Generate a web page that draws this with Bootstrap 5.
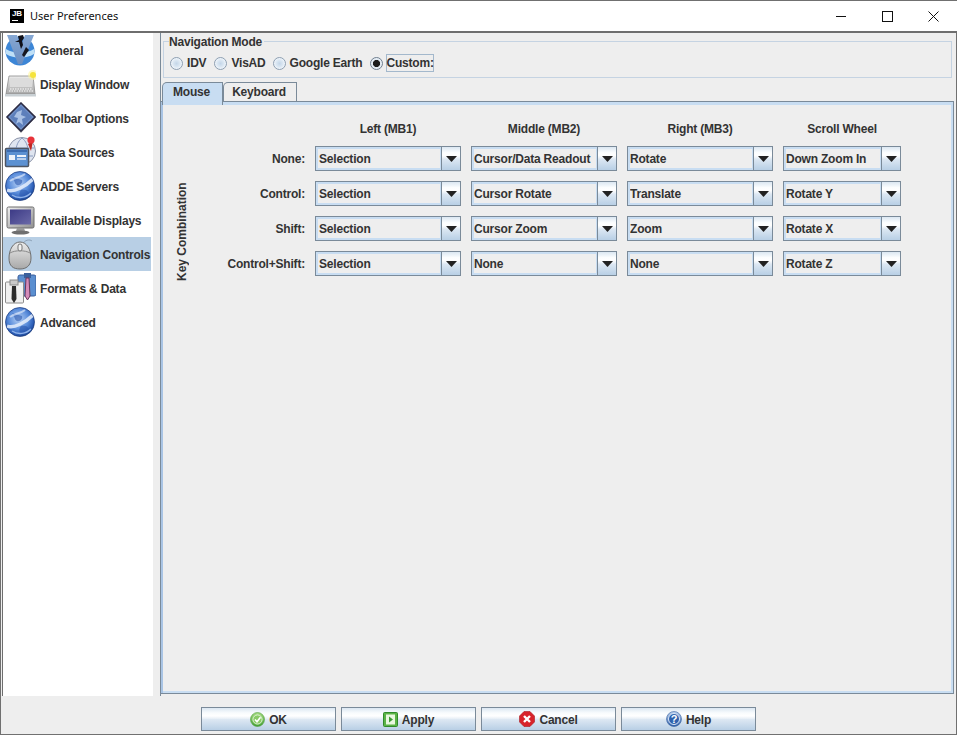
<!doctype html>
<html lang="en">
<head>
<meta charset="utf-8">
<title>User Preferences</title>
<link href="https://cdn.jsdelivr.net/npm/bootstrap@5.3.0/dist/css/bootstrap.min.css" rel="stylesheet">
<style>
html,body{margin:0;height:735px;overflow:hidden;background:#eee}
body{font:700 12px/14px "Liberation Sans",Arial,sans-serif;color:#333;letter-spacing:-.2px}
.defs-holder{width:0;height:0;display:block}
.win-frame{width:957px;height:735px;border:1px solid #707070;background:#eee}
.win-title{height:32px;background:#fff;border-bottom:2px solid #6e6e6e;margin:0 -1px 0 -1px;padding:0 1px 0 10px;flex:none}
.win-title-text{font:400 11px/16px "Noto Sans","Open Sans",sans-serif;color:#111;margin-left:6px;letter-spacing:0}
.jb-logo{width:14px;height:14px;background:#000;color:#fff;font:700 8px/9px "Liberation Sans",sans-serif;text-align:center;letter-spacing:0}
.jb-logo::after{content:"";display:block;width:6px;height:1px;background:#fff;margin:2px 0 0 2px}
.win-btn{width:46px;height:30px}
.work-row{height:663px;padding-left:1px;flex:none}
.pref-side{width:151px;flex:none;background:#fff;border-left:1px solid #6e6e6e;border-radius:0;display:block}
.list-group-item.pref-item{height:34px;width:148px;padding:0 0 0 1px;border:0;border-radius:0;background:transparent;color:#333;gap:4px;white-space:nowrap;font-weight:700;margin:0}
.list-group-item.pref-item.active{background:#b8cfe5;color:#333;border:0;margin:0}
.pref-item svg{flex:none}
.pref-label{margin-top:2px}
.pref-body{width:795px;margin-left:7px;border-left:1px solid #7a8a99;flex:none}
.mode-box{width:789px;height:45px;margin:0 0 4px 2px;border:1px solid #c5d3e2;padding:0 0 0 6px;display:block}
.mode-legend{float:none;width:auto;margin:0 0 0 -1px;padding:2px 2px 0 0;font:700 12px/14px "Liberation Sans",sans-serif;letter-spacing:-.2px;height:16px;display:table}
.mode-row{margin-top:5px;height:18px}
.mode-opt{margin:0;padding:0;min-height:0;gap:4px;margin-right:8px}
.mode-opt.tightopt{margin-right:7px}
.mode-opt.lastopt{margin-left:-1px;gap:3px}
.mode-radio.form-check-input{float:none;margin:0;width:13px;height:13px;border:1px solid #8d9fb2;background:radial-gradient(circle at 50% 50%,#c4d6e8 0,#dce8f3 45%,#fbfcfe 85%);box-shadow:none}
.mode-radio.form-check-input:checked{background:radial-gradient(circle,#1c1c1c 0,#1c1c1c 3.2px,#dfe8f1 3.9px,#f7f9fb 100%);border-color:#6f7f90}
.mode-text{margin:0;color:#333}
.mode-text.focused{border:1px solid #a3b8cc;padding:1px 0;line-height:14px;width:48px;text-align:center}
.tab-strip{height:19px;margin-left:1px;border:0;flex-wrap:nowrap}
.tab-strip .nav-link{height:19px;padding:2px 2px 0 0;text-align:center;border:1px solid #7a8a99;border-bottom:0;border-radius:5px 0 0 0;background:#eee;color:#333;font-weight:700;margin:0;line-height:14px}
.tab-strip .nav-link.active{height:23px;position:relative;z-index:2;background:#c8ddf2;color:#333;border-color:#7a8a99;width:61px;padding-top:2px}
.tab-strip .kb-tab{width:74px}
.tab-pane-box{width:793px;height:593px;border:1px solid #7a8a99;border-width:1px 1px 1px 0;box-shadow:inset 2px 0 0 #a9c4e4,inset -2px 0 0 #c8ddf2,inset 0 3px 0 #c8ddf2,inset 0 -2px 0 #c8ddf2;padding:12px 0 0 3px}
.keycombo{writing-mode:vertical-rl;transform:rotate(180deg);width:14px;height:97px;margin:70px 0 0 11px;white-space:nowrap;flex:none;line-height:14px;letter-spacing:0}
.map-grid{display:grid;grid-template-columns:117px 146px 146px 146px 118px;grid-template-rows:22px repeat(4,25px);gap:10px;margin-left:-1px;align-content:start}
.col-head{align-self:end;text-align:center}
.row-head{text-align:right;align-self:center}
.combo-box{height:25px;border:1px solid #7a8a99;background:#eee}
.combo-val{flex:1 1 auto;min-width:0;border:2px solid #c8ddf2;border-right:1px solid #c8ddf2;padding:0;line-height:21px;white-space:nowrap;overflow:hidden}
.combo-val.sel{padding-left:1px}
.combo-arrow{width:19px;flex:none;border-left:1px solid #7a8a99;background:linear-gradient(#dbe7f2 0,#fbfdfe 24%,#ffffff 36%,#e9f0f7 48%,#dde8f3 52%,#b8cfe5 100%);display:flex;align-items:center;justify-content:center}
.foot-row{height:38px;flex:none;padding-top:11px;gap:5px}
.metal-btn.btn{width:135px;height:24px;padding:1px 0 0;border:1px solid #7a8a99;border-radius:0;color:#333;font:700 12px/14px "Liberation Sans",sans-serif;letter-spacing:-.2px;background:linear-gradient(#dbe7f2 0,#f8fbfd 22%,#ffffff 36%,#e9f0f7 48%,#dde8f3 52%,#b8cfe5 100%);gap:4px}
.metal-btn svg{margin-top:-1px}
</style>
</head>
<body>
<svg class="defs-holder" aria-hidden="true">
<defs>
<radialGradient id="gl" cx=".45" cy=".4" r=".62"><stop offset="0" stop-color="#b7d0f4"/><stop offset=".55" stop-color="#5a8ddb"/><stop offset=".85" stop-color="#2a5cb5"/><stop offset="1" stop-color="#1a4088"/></radialGradient>
<linearGradient id="gv" x1="0" y1="0" x2="0" y2="1"><stop offset="0" stop-color="#86a8d4"/><stop offset="1" stop-color="#6b8dbf"/></linearGradient>
<linearGradient id="gs" x1="0" y1="0" x2="0" y2="1"><stop offset="0" stop-color="#ececec"/><stop offset="1" stop-color="#a8a8a8"/></linearGradient>
<linearGradient id="gm" x1="0" y1="0" x2="1" y2="1"><stop offset="0" stop-color="#f1f1f1"/><stop offset="1" stop-color="#8f8f8f"/></linearGradient>
<linearGradient id="gd" x1="0" y1="0" x2="1" y2="1"><stop offset="0" stop-color="#3c3a86"/><stop offset="1" stop-color="#6b6aa8"/></linearGradient>
<linearGradient id="gok" x1="0" y1="0" x2="0" y2="1"><stop offset="0" stop-color="#a6dc80"/><stop offset="1" stop-color="#43a033"/></linearGradient>
<linearGradient id="gbl" x1="0" y1="0" x2="0" y2="1"><stop offset="0" stop-color="#bcd2f0"/><stop offset="1" stop-color="#2f5ea8"/></linearGradient>
<symbol id="globe" viewBox="0 0 32 32">
<circle cx="16" cy="16" r="14.500" fill="url(#gl)"/>
<path d="M8 7C11 10 10 14 13 15C16 16 19 13 18 10ZM17 20C20 19 25 20 25 24C23 27 19 28 16 27C15 25 15 22 17 20Z" fill="#2a56ad" opacity=".6"/>
<path d="M3 20C10 23 22 16 29 9" fill="none" stroke="#e6effc" stroke-width="3.500" opacity=".85"/>
<path d="M6 11C11 7 16 8 21 4" fill="none" stroke="#eef4fe" stroke-width="2" opacity=".6"/>
<path d="M8 25C14 29 22 28 27 23" fill="none" stroke="#8fb2ea" stroke-width="1.500"/>
<circle cx="16" cy="16" r="14.500" fill="none" stroke="#1a3a7c" stroke-width=".7"/>
</symbol>
</defs>
</svg>
<div class="win-frame d-flex flex-column">
  <div class="win-title d-flex align-items-center">
    <div class="jb-logo">JB</div>
    <span class="win-title-text">User Preferences</span>
    <div class="d-flex ms-auto">
      <div class="win-btn d-flex align-items-center justify-content-center"><svg width="11" height="11" viewBox="0 0 11 11"><path d="M0 5.500H10" stroke="#111" fill="none"/></svg></div>
      <div class="win-btn d-flex align-items-center justify-content-center"><svg width="11" height="11" viewBox="0 0 11 11"><rect x=".5" y=".5" width="10" height="10" stroke="#111" fill="none"/></svg></div>
      <div class="win-btn d-flex align-items-center justify-content-center"><svg width="11" height="11" viewBox="0 0 11 11"><path d="M.5 .5L10.500 10.500M10.500 .5L.5 10.500" stroke="#111" fill="none"/></svg></div>
    </div>
  </div>
  <div class="work-row d-flex">
    <div class="pref-side list-group">
      <a class="pref-item list-group-item d-flex align-items-center">
        <svg width="32" height="32" viewBox="0 0 32 32"><circle cx="16" cy="17" r="14.500" fill="#3d86d6"/><path d="M2 15C10 20 22 20 30 15V20C22 25 10 25 2 20Z" fill="#bfe0f7"/><path d="M3 1H13L17 12L21 1H30L18 30H14Z" fill="url(#gv)"/><path d="M14 2L19 1L20 4L18 7L19 11L17 15L15 8L11 8L15 6Z" fill="#101018"/><path d="M22 13L25 16L20 23L18 21Z" fill="#17171f"/></svg>
        <span class="pref-label">General</span></a>
      <a class="pref-item list-group-item d-flex align-items-center">
        <svg width="32" height="32" viewBox="0 0 32 32"><path d="M5 8H29L31 26H2Z" fill="url(#gs)" stroke="#8c8c8c" stroke-width=".8"/><rect x="6" y="10" width="22" height="9" fill="#dcdcdc"/><path d="M6 21H28M5 23H29" stroke="#fff" stroke-dasharray="1.500 1"/><rect x="1" y="26" width="31" height="2.500" fill="#c9d0d4"/><circle cx="29" cy="7" r="5" fill="#fff59a" opacity=".6"/><circle cx="29" cy="7" r="3" fill="#f5e33b"/></svg>
        <span class="pref-label">Display Window</span></a>
      <a class="pref-item list-group-item d-flex align-items-center">
        <svg width="32" height="32" viewBox="0 0 32 32"><path d="M6 18L17 30L28 18" fill="none" stroke="#a5a5a5" stroke-width="1.400"/><path d="M17 1L31 15L17 29L3 15Z" fill="#6f8fc6" stroke="#2c2c44" stroke-width="1.600"/><path d="M17 4L28 15L17 26L6 15Z" fill="#5d7fbb"/><path d="M13 10L18 8L17 13L22 15L18 17L19 23L15 20L12 22L14 16L10 15Z" fill="#a9c0e4"/></svg>
        <span class="pref-label">Toolbar Options</span></a>
      <a class="pref-item list-group-item d-flex align-items-center">
        <svg width="32" height="32" viewBox="0 0 32 32"><circle cx="18" cy="15" r="13.500" fill="#dfe5f0" stroke="#8b93a8"/><path d="M6 12H30M8 20H29M18 2C10 8 10 22 18 28C26 22 26 8 18 2Z" fill="none" stroke="#8a9cc0"/><path d="M24 8L27 15L29 5Z" fill="#c2261f"/><circle cx="27" cy="4" r="3.600" fill="#e8333a"/><rect x="1.500" y="12.500" width="23" height="18" rx="1" fill="#5c91d2" stroke="#4d5563" stroke-width="1.500"/><rect x="3" y="14" width="20" height="2" fill="#3c6cb0"/><rect x="5" y="19" width="6" height="5" fill="#eef3fa"/><rect x="13" y="19" width="9" height="2" fill="#eef3fa"/><rect x="13" y="22" width="9" height="2" fill="#b9d0ee"/></svg>
        <span class="pref-label">Data Sources</span></a>
      <a class="pref-item list-group-item d-flex align-items-center">
        <svg width="32" height="32"><use href="#globe"/></svg>
        <span class="pref-label">ADDE Servers</span></a>
      <a class="pref-item list-group-item d-flex align-items-center">
        <svg width="32" height="32" viewBox="0 0 32 32"><rect x="3" y="3" width="27" height="21" rx="1.500" fill="url(#gm)" stroke="#6d6d6d"/><rect x="6" y="5.500" width="21" height="15" fill="url(#gd)"/><path d="M13 24H20L21 27H12Z" fill="#9a9a9a"/><ellipse cx="16.500" cy="28.500" rx="9" ry="2" fill="#6f6f6f"/></svg>
        <span class="pref-label">Available Displays</span></a>
      <a class="pref-item list-group-item active d-flex align-items-center" aria-current="true">
        <svg width="32" height="32" viewBox="0 0 32 32"><path d="M19 6C20 2 26 1 28 3" fill="none" stroke="#8fa3b8"/><path d="M16 4C23 4 27 12 27 20C27 28 22 31 16 31C9 31 5 28 5 20C5 12 9 4 16 4Z" fill="url(#gs)" stroke="#6e6e6e"/><path d="M6 15C11 12 21 12 26 15" fill="none" stroke="#8b8b8b"/><rect x="14" y="6" width="4" height="7" rx="2" fill="#f2f2f2" stroke="#777"/></svg>
        <span class="pref-label">Navigation Controls</span></a>
      <a class="pref-item list-group-item d-flex align-items-center">
        <svg width="32" height="32" viewBox="0 0 32 32"><rect x="14" y="3" width="18" height="21" rx="2" fill="#5b8fd0" stroke="#3a5f9c"/><rect x="20" y="1" width="7" height="5" fill="#3a5f9c"/><path d="M22 6H25L26 24L23.500 28L21 24Z" fill="#d58ab8" stroke="#65365c"/><rect x="1.500" y="10" width="18" height="21" rx="1" fill="#f0f0f0" stroke="#8a8a8a"/><rect x="6" y="8" width="8" height="5" fill="#c9c9c9" stroke="#8a8a8a"/><path d="M8 14H12L12.500 27L10 31L7.500 27Z" fill="#2b2b2b"/></svg>
        <span class="pref-label">Formats &amp; Data</span></a>
      <a class="pref-item list-group-item d-flex align-items-center">
        <svg width="32" height="32"><use href="#globe"/></svg>
        <span class="pref-label">Advanced</span></a>
    </div>
    <div class="pref-body">
      <fieldset class="mode-box">
        <legend class="mode-legend">Navigation Mode</legend>
        <div class="mode-row d-flex align-items-center">
          <div class="mode-opt form-check d-flex align-items-center"><input class="mode-radio form-check-input" type="radio" name="navmode" id="m1"><label class="mode-text" for="m1">IDV</label></div>
          <div class="mode-opt tightopt form-check d-flex align-items-center"><input class="mode-radio form-check-input" type="radio" name="navmode" id="m2"><label class="mode-text" for="m2">VisAD</label></div>
          <div class="mode-opt form-check d-flex align-items-center"><input class="mode-radio form-check-input" type="radio" name="navmode" id="m3"><label class="mode-text" for="m3">Google Earth</label></div>
          <div class="mode-opt lastopt form-check d-flex align-items-center"><input class="mode-radio form-check-input" type="radio" name="navmode" id="m4" checked><label class="mode-text focused" for="m4">Custom:</label></div>
        </div>
      </fieldset>
      <ul class="tab-strip nav nav-tabs">
        <li class="nav-item"><a class="nav-link active" aria-current="page">Mouse</a></li>
        <li class="nav-item"><a class="nav-link kb-tab">Keyboard</a></li>
      </ul>
      <div class="tab-pane-box d-flex">
        <div class="keycombo">Key Combination</div>
        <div class="map-grid">
          <div></div><div class="col-head">Left (MB1)</div><div class="col-head">Middle (MB2)</div><div class="col-head">Right (MB3)</div><div class="col-head">Scroll Wheel</div>

          <div class="row-head">None:</div>
          <div class="combo-box d-flex"><div class="combo-val sel">Selection</div><div class="combo-arrow"><svg width="11" height="6"><path d="M0 0H11L5.500 6Z" fill="#222"/></svg></div></div>
          <div class="combo-box d-flex"><div class="combo-val">Cursor/Data Readout</div><div class="combo-arrow"><svg width="11" height="6"><path d="M0 0H11L5.500 6Z" fill="#222"/></svg></div></div>
          <div class="combo-box d-flex"><div class="combo-val">Rotate</div><div class="combo-arrow"><svg width="11" height="6"><path d="M0 0H11L5.500 6Z" fill="#222"/></svg></div></div>
          <div class="combo-box d-flex"><div class="combo-val">Down Zoom In</div><div class="combo-arrow"><svg width="11" height="6"><path d="M0 0H11L5.500 6Z" fill="#222"/></svg></div></div>

          <div class="row-head">Control:</div>
          <div class="combo-box d-flex"><div class="combo-val sel">Selection</div><div class="combo-arrow"><svg width="11" height="6"><path d="M0 0H11L5.500 6Z" fill="#222"/></svg></div></div>
          <div class="combo-box d-flex"><div class="combo-val">Cursor Rotate</div><div class="combo-arrow"><svg width="11" height="6"><path d="M0 0H11L5.500 6Z" fill="#222"/></svg></div></div>
          <div class="combo-box d-flex"><div class="combo-val">Translate</div><div class="combo-arrow"><svg width="11" height="6"><path d="M0 0H11L5.500 6Z" fill="#222"/></svg></div></div>
          <div class="combo-box d-flex"><div class="combo-val">Rotate Y</div><div class="combo-arrow"><svg width="11" height="6"><path d="M0 0H11L5.500 6Z" fill="#222"/></svg></div></div>

          <div class="row-head">Shift:</div>
          <div class="combo-box d-flex"><div class="combo-val sel">Selection</div><div class="combo-arrow"><svg width="11" height="6"><path d="M0 0H11L5.500 6Z" fill="#222"/></svg></div></div>
          <div class="combo-box d-flex"><div class="combo-val">Cursor Zoom</div><div class="combo-arrow"><svg width="11" height="6"><path d="M0 0H11L5.500 6Z" fill="#222"/></svg></div></div>
          <div class="combo-box d-flex"><div class="combo-val">Zoom</div><div class="combo-arrow"><svg width="11" height="6"><path d="M0 0H11L5.500 6Z" fill="#222"/></svg></div></div>
          <div class="combo-box d-flex"><div class="combo-val">Rotate X</div><div class="combo-arrow"><svg width="11" height="6"><path d="M0 0H11L5.500 6Z" fill="#222"/></svg></div></div>

          <div class="row-head">Control+Shift:</div>
          <div class="combo-box d-flex"><div class="combo-val sel">Selection</div><div class="combo-arrow"><svg width="11" height="6"><path d="M0 0H11L5.500 6Z" fill="#222"/></svg></div></div>
          <div class="combo-box d-flex"><div class="combo-val">None</div><div class="combo-arrow"><svg width="11" height="6"><path d="M0 0H11L5.500 6Z" fill="#222"/></svg></div></div>
          <div class="combo-box d-flex"><div class="combo-val">None</div><div class="combo-arrow"><svg width="11" height="6"><path d="M0 0H11L5.500 6Z" fill="#222"/></svg></div></div>
          <div class="combo-box d-flex"><div class="combo-val">Rotate Z</div><div class="combo-arrow"><svg width="11" height="6"><path d="M0 0H11L5.500 6Z" fill="#222"/></svg></div></div>
        </div>
      </div>
    </div>
  </div>
  <div class="foot-row d-flex justify-content-center">
    <button class="metal-btn btn d-flex align-items-center justify-content-center" type="button"><svg width="15" height="15" viewBox="0 0 15 15"><circle cx="7.500" cy="7.500" r="7" fill="url(#gok)" stroke="#4d9a3c" stroke-width=".6"/><circle cx="7.500" cy="7.500" r="4.600" fill="#8acb67" stroke="#e4f5da"/><path d="M5 7.500L7 9.800L10.500 5.300" fill="none" stroke="#fff" stroke-width="1.600"/></svg>OK</button>
    <button class="metal-btn btn d-flex align-items-center justify-content-center" type="button"><svg width="15" height="15" viewBox="0 0 15 15"><rect x=".5" y=".5" width="14" height="14" rx="1" fill="#5ab345" stroke="#2f8a2a"/><rect x="3" y="2.500" width="9" height="10" fill="#e9f7df"/><path d="M6 4.500L10 7.500L6 10.500Z" fill="#3c9c33"/></svg>Apply</button>
    <button class="metal-btn btn d-flex align-items-center justify-content-center" type="button"><svg width="16" height="16" viewBox="0 0 16 16"><path d="M5 .5H11L15.500 5V11L11 15.500H5L.5 11V5Z" fill="#d8232a" stroke="#a81a20" stroke-width=".6"/><path d="M5 5L11 11M11 5L5 11" stroke="#fff" stroke-width="2.400"/></svg>Cancel</button>
    <button class="metal-btn btn d-flex align-items-center justify-content-center" type="button"><svg width="16" height="16" viewBox="0 0 16 16"><circle cx="8" cy="8" r="7.500" fill="url(#gbl)" stroke="#345f9e" stroke-width=".6"/><circle cx="8" cy="8" r="5.500" fill="#2f62ad" stroke="#d9e6f7"/><text x="8" y="12" text-anchor="middle" fill="#fff" font-family="Liberation Sans" font-weight="700" font-size="11">?</text></svg>Help</button>
  </div>
</div>
<script src="https://cdn.jsdelivr.net/npm/bootstrap@5.3.0/dist/js/bootstrap.bundle.min.js"></script>
</body>
</html>
